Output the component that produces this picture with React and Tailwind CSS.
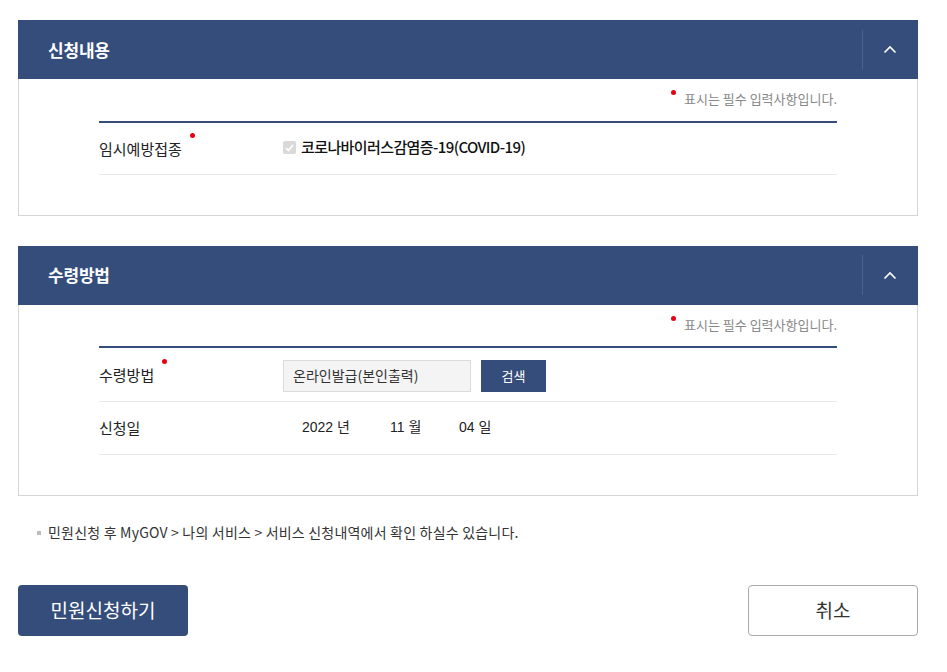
import React from "react";

const KR = { fontFamily: '"Noto Sans CJK KR", "Noto Sans", sans-serif' };
const NUM = { fontFamily: '"Liberation Sans", "Noto Sans CJK KR", sans-serif' };

function Chevron() {
  return (
    <svg width="14" height="9" viewBox="0 0 14 9" fill="none">
      <path d="M1.5 7.5 L7 2 L12.5 7.5" stroke="#ffffff" strokeWidth="1.6" />
    </svg>
  );
}

function SectionHeader({ title }) {
  return (
    <div className="flex h-[59px] items-center bg-[#354d7a] pl-[30px]">
      <h2 className="text-[17px] font-bold tracking-[-0.2px] text-white">{title}</h2>
      <div className="ml-auto flex h-full items-center">
        <div className="h-10 w-px bg-[#4a6190]" />
        <button className="flex h-full w-[55px] items-center justify-center pr-[2px]">
          <Chevron />
        </button>
      </div>
    </div>
  );
}

function RequiredNote() {
  return (
    <p className="flex justify-end pt-[10px] text-[13px] tracking-[0px] text-[#888]">
      <span className="relative pl-[13px]">
        <span className="absolute left-0 top-[1px] h-[5px] w-[5px] rounded-full bg-[#e60012]" />
        표시는 필수 입력사항입니다.
      </span>
    </p>
  );
}

function Label({ children, required }) {
  return (
    <div className="w-[184px] shrink-0 text-[15px] text-[#222]">
      <span className="relative">
        {children}
        {required && (
          <span className="absolute -right-[13px] -top-[5px] h-[5px] w-[5px] rounded-full bg-[#e60012]" />
        )}
      </span>
    </div>
  );
}

export default function App() {
  return (
    <div className="w-[900px] bg-white ml-[18px] pt-5 pb-9" style={KR}>
      {/* 신청내용 */}
      <section>
        <SectionHeader title="신청내용" />
        <div className="border border-t-0 border-[#d6d6d6] px-[80px] pb-10">
          <RequiredNote />
          <div className="mt-[12px] border-t-2 border-[#354d7a]">
            <div className="flex h-[52px] items-center border-b border-[#e8e8e8] pt-[2px]">
              <Label required>임시예방접종</Label>
              <div className="-mt-[3px] flex items-center gap-[5px]">
                <span className="flex h-[13px] w-[13px] items-center justify-center rounded-[2px] bg-[#d9d9d9]">
                  <svg width="9" height="8" viewBox="0 0 9 8" fill="none">
                    <path d="M1 4.2 L3.4 6.5 L8 1" stroke="#ffffff" strokeWidth="1.6" />
                  </svg>
                </span>
                <span className="text-[15px] font-medium tracking-[-0.6px] text-[#111]">
                  코로나바이러스감염증-19(COVID-19)
                </span>
              </div>
            </div>
          </div>
        </div>
      </section>

      {/* 수령방법 */}
      <section className="mt-[30px]">
        <SectionHeader title="수령방법" />
        <div className="border border-t-0 border-[#d6d6d6] px-[80px] pb-10">
          <RequiredNote />
          <div className="mt-[12px] border-t-2 border-[#354d7a]">
            <div className="flex h-[54px] items-center border-b border-[#e8e8e8] pt-[2px]">
              <Label required>수령방법</Label>
              <div className="flex items-center gap-[10px]">
                <div className="flex h-8 w-[188px] items-center border border-[#dcdcdc] bg-[#f4f4f4] px-[9px] text-[14px] text-[#333]">
                  온라인발급(본인출력)
                </div>
                <button className="h-8 w-[65px] bg-[#354d7a] text-[13px] text-white">검색</button>
              </div>
            </div>
            <div className="flex h-[53px] items-center border-b border-[#e8e8e8]">
              <Label>신청일</Label>
              <div className="-mt-[2px] flex items-center pl-[19px] text-[14px] text-[#222]" style={NUM}>
                <span className="w-[88px]">2022 년</span>
                <span className="w-[69px]">11 월</span>
                <span>04 일</span>
              </div>
            </div>
          </div>
        </div>
      </section>

      {/* 안내 */}
      <p className="mt-[26px] flex items-center gap-[7px] pl-[19px] text-[14px] tracking-[0.2px] text-[#333]">
        <span className="h-[4px] w-[4px] bg-[#bbb]" />
        민원신청 후 MyGOV &gt; 나의 서비스 &gt; 서비스 신청내역에서 확인 하실수 있습니다.
      </p>

      {/* 버튼 */}
      <div className="mt-[42px] flex justify-between">
        <button className="h-[51px] w-[170px] rounded-[4px] bg-[#354d7a] text-[19px] text-white">
          민원신청하기
        </button>
        <button className="h-[51px] w-[170px] rounded-[4px] border border-[#aaa] bg-white text-[19px] text-[#333]">
          취소
        </button>
      </div>
    </div>
  );
}
